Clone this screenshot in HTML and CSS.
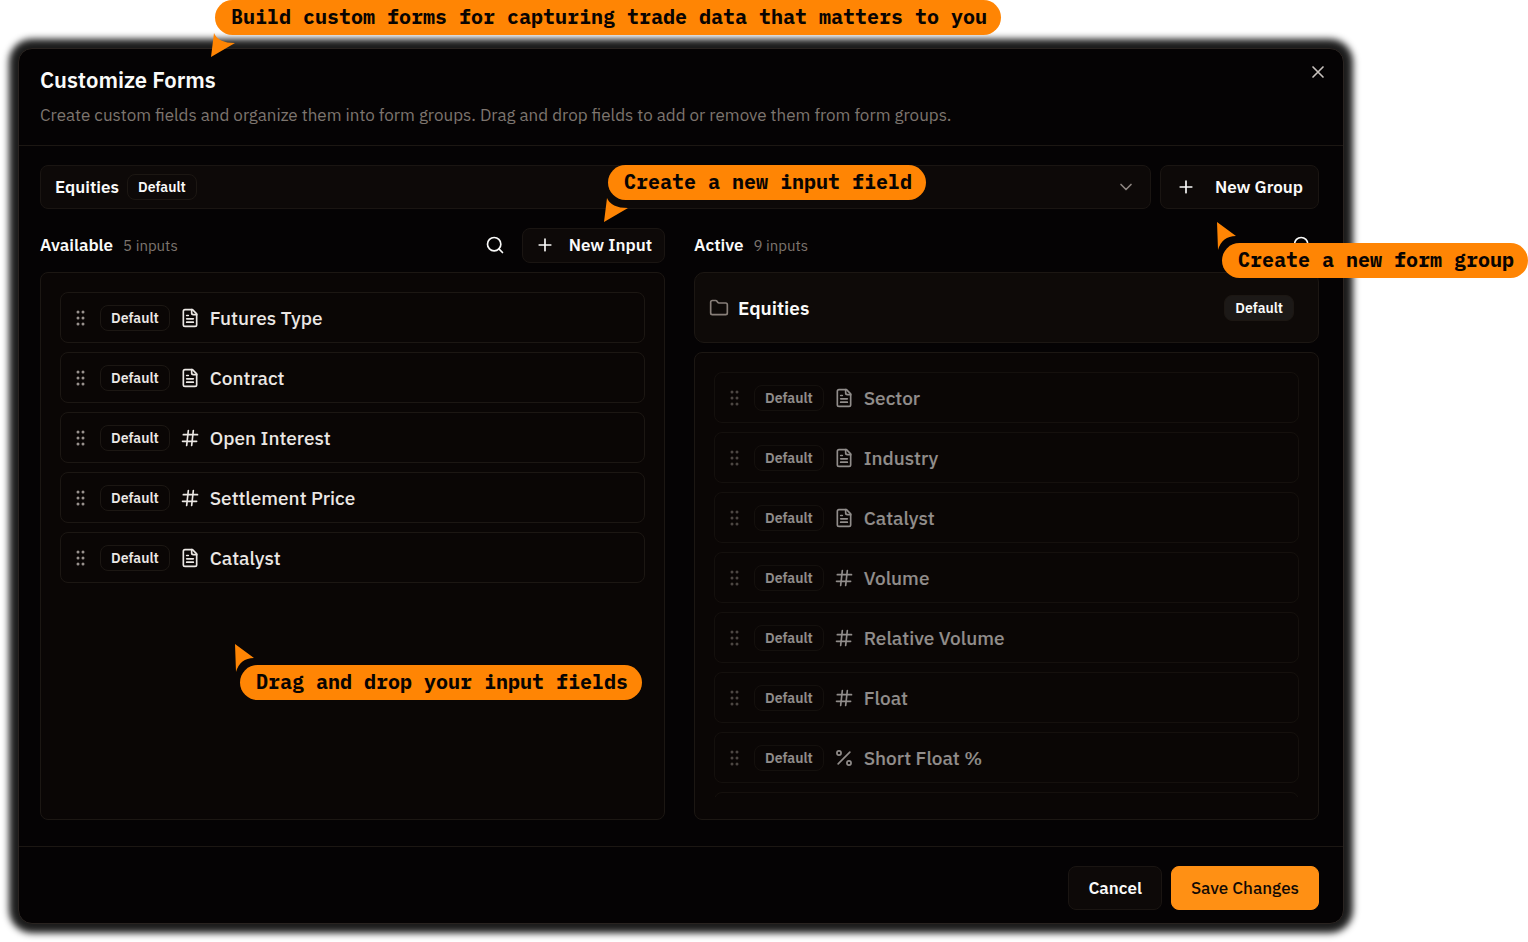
FILE: index.html
```html
<!DOCTYPE html>
<html lang="en">
    <head>
        <meta charset="utf-8">
        <title>Customize Forms</title>
        <link rel="stylesheet" href="styles.css">
    </head>
    <body>

        <!--Icons-->
        <svg class="sprite" aria-hidden="true">
            <symbol id="i-grip" viewBox="0 0 10 16">
                <g fill="currentColor">
                    <circle cx="2" cy="2" r="1.5"/><circle cx="7" cy="2" r="1.5"/>
                    <circle cx="2" cy="8" r="1.5"/><circle cx="7" cy="8" r="1.5"/>
                    <circle cx="2" cy="14" r="1.5"/><circle cx="7" cy="14" r="1.5"/>
                </g>
            </symbol>
            <symbol id="i-text" viewBox="0 0 24 24">
                <path d="M15 2H6a2 2 0 0 0-2 2v16a2 2 0 0 0 2 2h12a2 2 0 0 0 2-2V7z"/>
                <path d="M14 2v4a2 2 0 0 0 2 2h4"/>
                <path d="M10 9H8M16 13H8M16 17H8"/>
            </symbol>
            <symbol id="i-hash" viewBox="0 0 24 24">
                <path d="M4 8h17M3 16h17M10 3 8 21M16 3l-2 18"/>
            </symbol>
            <symbol id="i-percent" viewBox="0 0 24 24">
                <path d="M19 5 5 19"/>
                <circle cx="6" cy="6" r="2.500"/><circle cx="18" cy="18" r="2.500"/>
            </symbol>
            <symbol id="i-search" viewBox="0 0 24 24">
                <circle cx="11" cy="11" r="8"/><path d="m21 21-4.300-4.300"/>
            </symbol>
            <symbol id="i-plus" viewBox="0 0 24 24">
                <path d="M5 12h14M12 5v14"/>
            </symbol>
            <symbol id="i-close" viewBox="0 0 24 24">
                <path d="M6 6l12 12M18 6 6 18"/>
            </symbol>
            <symbol id="i-chevron" viewBox="0 0 24 24">
                <path d="m6 9 6 6 6-6"/>
            </symbol>
            <symbol id="i-folder" viewBox="0 0 24 24">
                <path d="M20 20a2 2 0 0 0 2-2V8a2 2 0 0 0-2-2h-7.900a2 2 0 0 1-1.700-.9L9.600 3.900A2 2 0 0 0 7.900 3H4a2 2 0 0 0-2 2v13a2 2 0 0 0 2 2z"/>
            </symbol>
            <symbol id="i-pointer-up" viewBox="0 0 20 28">
                <path d="M0 0 19 14Q5 14 1 28z"/>
            </symbol>
            <symbol id="i-pointer-down" viewBox="0 0 24 24">
                <path d="M3 0Q7 10 24 10L0 24z"/>
            </symbol>
        </svg>

        <main class="modal">

            <header class="modal_header">
                <div>
                    <h1>Customize Forms</h1>
                    <p>Create custom fields and organize them into form groups. Drag and drop fields to add or remove them from form groups.</p>
                </div>
                <button class="icon_button close" aria-label="Close"><svg class="icon"><use href="#i-close"/></svg></button>
            </header>

            <div class="modal_body">

                <!--Group picker-->
                <div class="group_row">
                    <div class="group_select">
                        <select aria-label="Form group">
                            <option>Equities</option>
                        </select>
                        <span class="badge">Default</span>
                        <svg class="icon"><use href="#i-chevron"/></svg>
                    </div>
                    <button class="button"><svg class="icon"><use href="#i-plus"/></svg>New Group</button>
                </div>

                <div class="columns">

                    <!--Available inputs-->
                    <section class="column">
                        <div class="column_header">
                            <h2>Available</h2>
                            <span class="count">5 inputs</span>
                            <button class="icon_button" aria-label="Search available inputs"><svg class="icon"><use href="#i-search"/></svg></button>
                            <button class="button button_small"><svg class="icon"><use href="#i-plus"/></svg>New Input</button>
                        </div>
                        <div class="panel">
                            <ul class="fields">
                                <li class="field"><svg class="grip"><use href="#i-grip"/></svg><span class="badge">Default</span><svg class="icon"><use href="#i-text"/></svg>Futures Type</li>
                                <li class="field"><svg class="grip"><use href="#i-grip"/></svg><span class="badge">Default</span><svg class="icon"><use href="#i-text"/></svg>Contract</li>
                                <li class="field"><svg class="grip"><use href="#i-grip"/></svg><span class="badge">Default</span><svg class="icon"><use href="#i-hash"/></svg>Open Interest</li>
                                <li class="field"><svg class="grip"><use href="#i-grip"/></svg><span class="badge">Default</span><svg class="icon"><use href="#i-hash"/></svg>Settlement Price</li>
                                <li class="field"><svg class="grip"><use href="#i-grip"/></svg><span class="badge">Default</span><svg class="icon"><use href="#i-text"/></svg>Catalyst</li>
                            </ul>
                        </div>
                    </section>

                    <!--Active inputs-->
                    <section class="column">
                        <div class="column_header">
                            <h2>Active</h2>
                            <span class="count">9 inputs</span>
                            <button class="icon_button" aria-label="Search active inputs"><svg class="icon"><use href="#i-search"/></svg></button>
                        </div>
                        <div class="group_card">
                            <svg class="icon"><use href="#i-folder"/></svg>
                            <h3>Equities</h3>
                            <span class="badge badge_filled">Default</span>
                        </div>
                        <div class="panel">
                            <ul class="fields fields_locked">
                                <li class="field"><svg class="grip"><use href="#i-grip"/></svg><span class="badge">Default</span><svg class="icon"><use href="#i-text"/></svg>Sector</li>
                                <li class="field"><svg class="grip"><use href="#i-grip"/></svg><span class="badge">Default</span><svg class="icon"><use href="#i-text"/></svg>Industry</li>
                                <li class="field"><svg class="grip"><use href="#i-grip"/></svg><span class="badge">Default</span><svg class="icon"><use href="#i-text"/></svg>Catalyst</li>
                                <li class="field"><svg class="grip"><use href="#i-grip"/></svg><span class="badge">Default</span><svg class="icon"><use href="#i-hash"/></svg>Volume</li>
                                <li class="field"><svg class="grip"><use href="#i-grip"/></svg><span class="badge">Default</span><svg class="icon"><use href="#i-hash"/></svg>Relative Volume</li>
                                <li class="field"><svg class="grip"><use href="#i-grip"/></svg><span class="badge">Default</span><svg class="icon"><use href="#i-hash"/></svg>Float</li>
                                <li class="field"><svg class="grip"><use href="#i-grip"/></svg><span class="badge">Default</span><svg class="icon"><use href="#i-percent"/></svg>Short Float %</li>
                                <li class="field"></li>
                            </ul>
                        </div>
                    </section>

                </div>
            </div>

            <footer class="modal_footer">
                <button class="button">Cancel</button>
                <button class="button button_primary">Save Changes</button>
            </footer>

            <!--Callouts over the dialog-->
            <div class="callout callout_title">
                <svg class="pointer_down"><use href="#i-pointer-down"/></svg>Build custom forms for capturing trade data that matters to you
            </div>
            <div class="callout callout_input">
                <svg class="pointer_down"><use href="#i-pointer-down"/></svg>Create a new input field
            </div>
            <div class="callout callout_group">
                <svg class="pointer_up"><use href="#i-pointer-up"/></svg>Create a new form group
            </div>
            <div class="callout callout_drag">
                <svg class="pointer_up"><use href="#i-pointer-up"/></svg>Drag and drop your input fields
            </div>
        </main>
    </body>
</html>
```
FILE: styles.css
```css
*{
    box-sizing: border-box;
}

html,body{
    border: 0;
    margin: 0;
    padding: 0;
}

body{
    min-height: 100vh;
    display: flex;
    padding: 48px 184px 18px 18px;
    background: white;
    font-family: "IBM Plex Sans", Roboto, sans-serif;
    color: #fafaf9;
}

h1,h2,h3,p,ul{
    margin: 0;
    padding: 0;
}

button,select{
    font: inherit;
    color: inherit;
    cursor: pointer;
}

.sprite{
    position: absolute;
    width: 0;
    height: 0;
}

.icon{
    flex: none;
    width: 20px;
    height: 20px;
    fill: none;
    stroke: currentColor;
    stroke-width: 2;
    stroke-linecap: round;
    stroke-linejoin: round;
}

/* Dialog */

.modal{
    position: relative;
    flex: 1;
    min-width: 0;
    display: flex;
    flex-direction: column;
    background: #050304;
    border: 1px solid #292320;
    border-radius: 14px;
    box-shadow: 0 0 7px 9px #1c1c1c;
}

.modal_header{
    display: flex;
    justify-content: space-between;
    align-items: flex-start;
    padding: 15px 15px 16px 21px;
    border-bottom: 1px solid #1c1713;
}

.modal_header h1{
    font-size: 22px;
    font-weight: 600;
    line-height: 32px;
}

.modal_header p{
    margin-top: 5px;
    font-size: 17px;
    line-height: 28px;
    color: #7d756f;
}

.icon_button{
    display: flex;
    padding: 5px 7px;
    border: 0;
    background: none;
}

.close{
    padding: 0;
    margin-top: -2px;
    color: #c8c2be;
}

.modal_body{
    flex: 1;
    display: flex;
    flex-direction: column;
    gap: 18px;
    padding: 19px 24px 26px 21px;
}

/* Group picker */

.group_row{
    display: flex;
    gap: 9px;
}

.group_select{
    position: relative;
    flex: 1;
}

.group_select select{
    appearance: none;
    width: 100%;
    height: 44px;
    padding: 0 14px;
    border: 1px solid #1a1512;
    border-radius: 8px;
    background: #0d0908;
    font-size: 17px;
    font-weight: 600;
}

.group_select .badge{
    position: absolute;
    left: 87px;
    top: 9px;
    pointer-events: none;
}

.group_select .icon{
    position: absolute;
    right: 15px;
    top: 12px;
    color: #8c8581;
    pointer-events: none;
}

.button{
    display: flex;
    align-items: center;
    gap: 19px;
    height: 44px;
    padding: 0 15px;
    border: 1px solid #1a1512;
    border-radius: 8px;
    background: #0d0908;
    font-size: 17px;
    font-weight: 600;
}

.button_small{
    height: 35px;
    gap: 14px;
    padding: 0 12px;
}

.badge{
    height: 26px;
    padding: 0 10px;
    border: 1px solid #1c1713;
    border-radius: 8px;
    font-size: 14px;
    font-weight: 600;
    line-height: 24px;
}

.badge_filled{
    background: #1c1917;
}

/* Columns */

.columns{
    flex: 1;
    display: grid;
    grid-template-columns: 1fr 1fr;
    gap: 29px;
}

.column{
    display: flex;
    flex-direction: column;
    gap: 9px;
}

.column_header{
    display: flex;
    align-items: center;
    gap: 10px;
    height: 36px;
}

.column_header h2{
    font-size: 17px;
    font-weight: 600;
}

.count{
    flex: 1;
    font-size: 15px;
    color: #7d756f;
}

.panel{
    flex: 1 1 0;
    min-height: 0;
    display: flex;
    flex-direction: column;
    padding: 19px 19px 22px;
    border: 1px solid #1c1713;
    border-radius: 8px;
    background: #0a0605;
}

.group_card{
    display: flex;
    align-items: center;
    gap: 9px;
    height: 71px;
    padding: 0 24px 0 14px;
    border: 1px solid #1c1713;
    border-radius: 10px;
    background: #0e0a08;
}

.group_card .icon{
    color: #877e78;
}

.group_card h3{
    flex: 1;
    font-size: 19px;
    font-weight: 600;
}

.fields{
    flex: 1 1 0;
    min-height: 0;
    display: flex;
    flex-direction: column;
    gap: 9px;
    overflow: hidden;
    list-style: none;
}

.field{
    flex: none;
    display: flex;
    align-items: center;
    gap: 10px;
    height: 51px;
    padding: 0 15px;
    border: 1px solid #1c1713;
    border-radius: 8px;
    font-size: 19px;
    font-weight: 500;
    color: #ebe7e4;
}

.grip{
    width: 10px;
    height: 16px;
    margin-right: 4px;
    color: #98918d;
}

.fields_locked .field{
    opacity: 0.6;
}

.fields_locked .grip{
    color: #79716b;
}

.modal_footer{
    display: flex;
    justify-content: flex-end;
    gap: 9px;
    padding: 19px 24px 13px;
    border-top: 1px solid #1c1713;
}

.modal_footer .button{
    padding: 0 19px;
}

.modal_footer .button_primary{
    border-color: #ff9014;
    background: #ff9014;
    color: #120a04;
    font-weight: 500;
}

/* Callouts */

.callout{
    position: absolute;
    height: 35px;
    padding: 0 14px 0 16px;
    border-radius: 18px;
    background: #ff8504;
    color: #080402;
    font-family: "IBM Plex Mono", "Liberation Mono", monospace;
    font-size: 20px;
    font-weight: 700;
    line-height: 33px;
    white-space: nowrap;
}

.callout svg{
    position: absolute;
    fill: #ff8504;
}

.pointer_down{
    left: -4px;
    top: 33px;
    width: 24px;
    height: 24px;
}

.pointer_up{
    left: -5px;
    top: -21px;
    width: 20px;
    height: 28px;
}

.callout_title{
    left: 196px;
    top: -49px;
}

.callout_input{
    left: 589px;
    top: 116px;
}

.callout_group{
    right: -185px;
    top: 194px;
}

.callout_drag{
    left: 221px;
    top: 616px;
}
```
